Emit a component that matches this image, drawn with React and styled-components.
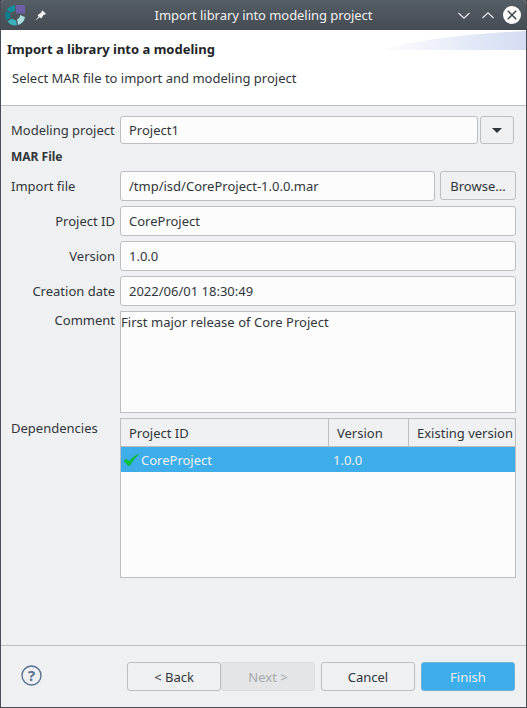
import React from "react";
import styled, { createGlobalStyle } from "styled-components";

const Global = createGlobalStyle`
  html, body { margin: 0; padding: 0; background: #3a3f44; }
  body { font-family: "Noto Sans", sans-serif; font-size: 13px; color: #31363b; }
`;

const Win = styled.div`
  width: 527px; height: 708px; display: flex; flex-direction: column;
  box-sizing: border-box; overflow: hidden; background: #eff0f1;
  border: solid #474d53; border-width: 0 1px 1px 1px;
  border-radius: 4px 4px 0 0;
`;
const TitleBar = styled.div`
  height: 30px; flex: none; margin: 0 -1px; display: flex; align-items: center; position: relative;
  background: linear-gradient(#555d65, #454c53); color: #eff0f1; font-size: 13px;
`;
const TitleText = styled.div`
  position: absolute; left: 0; right: 0; text-align: center; letter-spacing: -0.05px; padding-bottom: 1px;
`;
const TitleLeft = styled.div`
  display: flex; align-items: center; gap: 8px; padding-left: 5px; flex: 1; position: relative;
`;
const TitleRight = styled.div`
  display: flex; align-items: center; padding-right: 6px; position: relative;
`;
const ChevSlot = styled.div`
  display: flex; margin-right: ${p => p.$mr}px;
`;
const Header = styled.div`
  height: 76px; flex: none; background: #fff; position: relative; box-sizing: border-box;
  border-bottom: 1px solid #bcbebf; overflow: hidden;
`;
const HeaderTitle = styled.div`
  font-weight: 700; font-size: 13px; padding: 10px 0 0 6px; line-height: 18px; color: #232629;
`;
const HeaderSub = styled.div`
  font-size: 13px; padding: 11px 0 0 11px; line-height: 18px;
`;
const Banner = styled.svg`position: absolute; right: 0; top: 0;`;
const Body = styled.div`
  flex: 1; min-height: 0; padding: 10px 10px 0 10px; display: grid;
  grid-template-columns: 104px 1fr; column-gap: 5px; align-content: start;
`;
const Label = styled.div`
  text-align: ${p => p.$left ? "left" : "right"}; line-height: ${p => p.$top ? "18px" : p.$h || "30px"};
  white-space: nowrap;
`;
const Row = styled.div`
  display: flex; gap: ${p => p.$gap || 5}px; margin-bottom: ${p => p.$mb ?? 5}px; padding-right: ${p => p.$pr || 0}px;
`;
const Input = styled.div`
  flex: 1; height: ${p => p.$h || 30}px; box-sizing: border-box; background: #fcfcfc;
  border: 1px solid #bcbebf; border-radius: 3px; padding: 0 8px;
  line-height: ${p => (p.$h || 30) - 2}px; white-space: nowrap; overflow: hidden;
`;
const SectionLabel = styled.div`
  grid-column: 1 / 3; font-weight: 700; font-size: 12px; height: 27px; line-height: 26px; color: #31363b;
`;
const TextArea = styled.div`
  height: 102px; box-sizing: border-box; background: #fcfcfc; border: 1px solid #bcbebf;
  padding: 1px 0 0 0; line-height: 18px; margin-bottom: 5px; letter-spacing: 0.03px;
`;
const Table = styled.div`
  height: 160px; box-sizing: border-box; border: 1px solid #bcbebf; background: #fcfcfc;
  display: flex; flex-direction: column; overflow: hidden;
`;
const THead = styled.div`
  height: 27px; flex: none; display: grid; grid-template-columns: 207px 80px 1fr;
  background: #eff0f1; border-bottom: 1px solid #bcbebf; box-sizing: content-box;
`;
const Th = styled.div`
  padding-left: 8px; line-height: 28px; white-space: nowrap; overflow: hidden;
  & + & { border-left: 1px solid #bcbebf; }
`;
const TRow = styled.div`
  height: 25px; flex: none; background: #3daee9; color: #eff0f1; display: grid;
  grid-template-columns: 207px 80px 1fr; line-height: 26px;
`;
const Td = styled.div`
  display: flex; align-items: center; padding-left: ${p => p.$pl ?? 3}px; gap: 2px; white-space: nowrap;
`;
const Footer = styled.div`
  height: 62px; flex: none; box-sizing: border-box; border-top: 1px solid #bcbebf;
  display: flex; align-items: flex-start; padding: 16px 11px 0 20px;
`;
const Help = styled.svg`margin-top: 3px; flex: none;`;
const Buttons = styled.div`display: flex; margin-left: auto;`;
const Btn = styled.div`
  box-sizing: border-box; height: 29px; width: ${p => p.$w || 94}px;
  margin-left: ${p => p.$ml || 0}px; text-align: center; line-height: 28px; border-radius: 3px;
  border: 1px solid ${p => p.$primary ? "#6fb1d8" : p.$disabled ? "#dcdddd" : "#bcbebf"};
  background: ${p => p.$primary ? "#3daee9" : p.$disabled ? "#e3e5e7" : "#eff0f1"};
  color: ${p => p.$primary ? "#eff0f1" : p.$disabled ? "#a5a8aa" : "#31363b"};
`;
const SmallBtn = styled(Btn)`
  width: ${p => p.$w}px; height: ${p => p.$h}px; flex: none; display: flex; align-items: center; justify-content: center;
`;
const Arrow = styled.div`
  width: 0; height: 0; border-left: 5px solid transparent; border-right: 5px solid transparent;
  border-top: 5px solid #31363b;
`;

const Logo = () => (
  <svg width="21" height="21" viewBox="0 0 21 21">
    <rect x="11" y="0" width="9" height="8.5" fill="#6d5fa8" />
    <path d="M10 0.5A10 10 0 0 0 1.5 5L6.3 7.6A4.5 4.5 0 0 1 10 6Z" fill="#0f8f9c" />
    <path d="M1 6A10 10 0 0 0 1.8 15.5L6.2 12.6A4.5 4.5 0 0 1 5.7 8.5Z" fill="#0f7f8e" />
    <path d="M2.5 16.5A10 10 0 0 0 12 20.3L10.8 15A5 5 0 0 1 7 13.5Z" fill="#3bb0bd" />
    <path d="M13 20A10 10 0 0 0 20 12L15 10A5 5 0 0 1 12 14.5Z" fill="#a9dcdc" />
  </svg>
);
const Pin = () => (
  <svg width="13" height="13" viewBox="0 0 14 14">
    <path d="M1 13L5 8.2 3.8 6.6 8.2 3.6 8 2.5 9.2 1.6 12.8 5 11.8 6.2 10.6 6 7.8 10.2 6 9Z" fill="#f4f5f5" />
  </svg>
);
const Chev = ({ up }) => (
  <svg width="12" height="9" viewBox="0 0 12 9">
    <path d={up ? "M0.5 7L6 1.8 11.5 7" : "M0.5 2L6 7.2 11.5 2"} fill="none" stroke="#eff0f1" strokeWidth="1.1" />
  </svg>
);
const Close = () => (
  <svg width="18" height="18" viewBox="0 0 18 18">
    <circle cx="9" cy="9" r="9" fill="#fcfcfc" />
    <path d="M4.8 4.8l8.4 8.4M13.2 4.8l-8.4 8.4" stroke="#3a4046" strokeWidth="1.4" />
  </svg>
);
const Check = () => (
  <svg width="15" height="12" viewBox="0 0 15 12">
    <path d="M0 7L2.5 5 5 7.5C7.5 4.5 10.5 2 15 0 11 3.5 8.5 7 5.5 12L4.5 12Z" fill="#0fc63a" stroke="#0aa52f" strokeWidth="0.4" />
  </svg>
);

export default function App() {
  return (
    <Win>
      <Global />
      <TitleBar>
        <TitleText>Import library into modeling project</TitleText>
        <TitleLeft><Logo /><Pin /></TitleLeft>
        <TitleRight>
          <ChevSlot $mr={12}><Chev /></ChevSlot>
          <ChevSlot $mr={9}><Chev up /></ChevSlot>
          <Close />
        </TitleRight>
      </TitleBar>
      <Header>
        <Banner width="142" height="20" viewBox="0 0 142 20">
          <defs>
            <linearGradient id="bn" x1="0" x2="1">
              <stop offset="0" stopColor="#fdfdfe" />
              <stop offset="1" stopColor="#d3dcf3" />
            </linearGradient>
          </defs>
          <path d="M0 20C25 11 80 4 142 1V20Z" fill="url(#bn)" />
        </Banner>
        <HeaderTitle>Import a library into a modeling</HeaderTitle>
        <HeaderSub>Select MAR file to import and modeling project</HeaderSub>
      </Header>
      <Body>
        <Label $h="28px" $left>Modeling project</Label>
        <Row $gap={2} $mb={0} $pr={2}>
          <Input $h={28}>Project1</Input>
          <SmallBtn $w={34} $h={28}><Arrow /></SmallBtn>
        </Row>
        <SectionLabel>MAR File</SectionLabel>
        <Label $left>Import file</Label>
        <Row>
          <Input>/tmp/isd/CoreProject-1.0.0.mar</Input>
          <SmallBtn $w={76} $h={29}>Browse...</SmallBtn>
        </Row>
        <Label>Project ID</Label>
        <Row><Input>CoreProject</Input></Row>
        <Label>Version</Label>
        <Row><Input>1.0.0</Input></Row>
        <Label>Creation date</Label>
        <Row><Input>2022/06/01 18:30:49</Input></Row>
        <Label $top>Comment</Label>
        <TextArea>First major release of Core Project</TextArea>
        <Label $left $h="20px">Dependencies</Label>
        <Table>
          <THead>
            <Th>Project ID</Th>
            <Th>Version</Th>
            <Th>Existing version</Th>
          </THead>
          <TRow>
            <Td><Check />CoreProject</Td>
            <Td $pl={5}>1.0.0</Td>
            <Td />
          </TRow>
        </Table>
      </Body>
      <Footer>
        <Help width="21" height="21" viewBox="0 0 21 21">
          <circle cx="10.5" cy="10.5" r="9.5" fill="none" stroke="#59708f" strokeWidth="1.4" />
          <text x="10.5" y="15.5" textAnchor="middle" fontFamily="Noto Sans" fontWeight="700" fontSize="15" fill="#59708f">?</text>
        </Help>
        <Buttons>
          <Btn>&lt; Back</Btn>
          <Btn $disabled>Next &gt;</Btn>
          <Btn $ml={6}>Cancel</Btn>
          <Btn $primary $ml={6}>Finish</Btn>
        </Buttons>
      </Footer>
    </Win>
  );
}
